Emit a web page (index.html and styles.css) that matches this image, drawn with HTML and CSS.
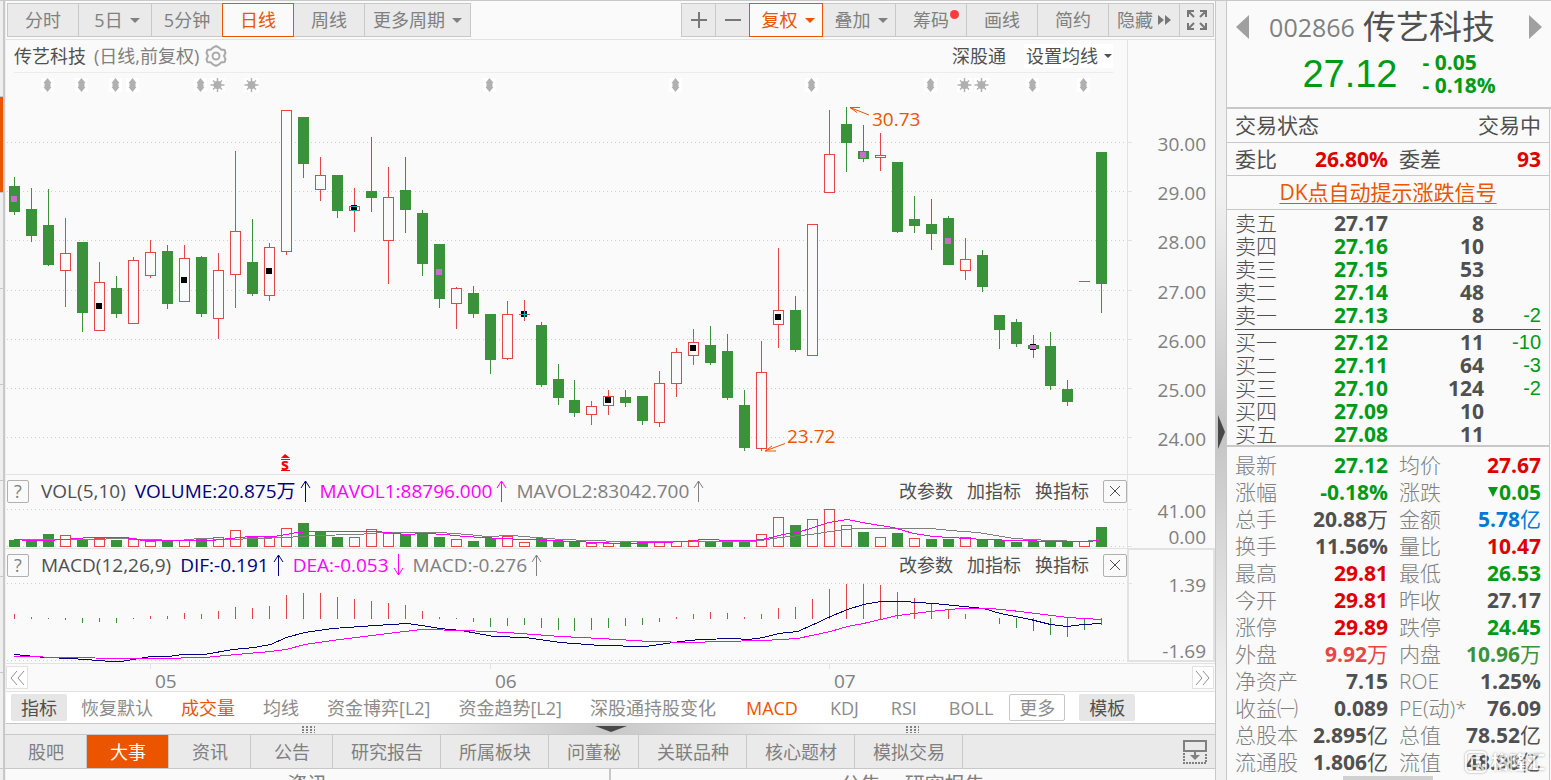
FILE: index.html
```html
<!DOCTYPE html>
<html lang="zh-CN">
<head>
    <meta charset="UTF-8">
    <title>传艺科技 002866</title>
    <meta name="viewport" content="width=device-width, initial-scale=1.0">
    <link rel="stylesheet" href="styles.css">
</head>
<body>
    <div class="rail">
        <span></span><span class="active"></span><span></span><span></span><span></span><span></span><span></span><span></span>
    </div>

    <main class="main-area">
        <div class="toolbar">
            <div class="btn-group">
                <button class="w-m">分时</button>
                <button class="w-c">5日<i class="caret"></i></button>
                <button class="w-m">5分钟</button>
                <button class="w-m active">日线</button>
                <button class="w-m">周线</button>
                <button class="w-l">更多周期<i class="caret"></i></button>
            </div>
            <div class="btn-group">
                <button class="w-s" aria-label="放大"><svg width="18" height="18"><path d="M9 1v16M1 9h16" stroke="#777" stroke-width="2"/></svg></button>
                <button class="w-s" aria-label="缩小"><svg width="18" height="18"><path d="M1 9h16" stroke="#777" stroke-width="2"/></svg></button>
                <button class="w-c active">复权<i class="caret"></i></button>
                <button class="w-c">叠加<i class="caret"></i></button>
                <button class="w-m"><span class="dotted">筹码</span></button>
                <button class="w-m">画线</button>
                <button class="w-m">简约</button>
                <button class="w-m">隐藏<svg class="ff" width="14" height="10"><path d="M1 0l6 5-6 5zM8 0l6 5-6 5z" fill="#777"/></svg></button>
                <button class="w-s" aria-label="全屏">
                    <svg width="22" height="22" fill="none" stroke="#777" stroke-width="2">
                        <path d="M2 8V2h6M2 2l6 6M14 2h6v6M20 2l-6 6M2 14v6h6M2 20l6-6M14 20h6v-6M20 20l-6-6"/>
                    </svg>
                </button>
            </div>
        </div>

        <section class="panel">
            <svg class="plot" id="kline" height="434"></svg>
            <div class="title-row">
                <div class="title-inner">
                    <b>传艺科技</b>
                    <span class="muted">(日线,前复权)</span>
                    <svg width="24" height="24" fill="none" stroke="#aaa" stroke-width="2">
                        <path d="M12 2l3 1.500 2 2 3.500.5 1 3-1.500 3 1.500 3-1 3-3.500.5-2 2-3 1.500-3-1.500-2-2-3.500-.5-1-3 1.500-3-1.500-3 1-3 3.500-.5 2-2z"/>
                        <circle cx="12" cy="12" r="3.500"/>
                    </svg>
                    <a class="push" href="#">深股通</a>
                    <button class="ma-btn">设置均线<i class="caret small"></i></button>
                </div>
            </div>
        </section>

        <section class="panel line">
            <svg class="plot" id="vol" height="73"></svg>
            <div class="legend">
                <button class="box">?</button>
                <span>VOL(5,10)</span>
                <span class="navy">VOLUME:20.875万<svg class="arr" width="11" height="22"><path d="M5.500 22V1M1 8l4.500-7L10 8"/></svg></span>
                <span class="pink">MAVOL1:88796.000<svg class="arr" width="11" height="22"><path d="M5.500 22V1M1 8l4.500-7L10 8"/></svg></span>
                <span class="muted">MAVOL2:83042.700<svg class="arr" width="11" height="22"><path d="M5.500 22V1M1 8l4.500-7L10 8"/></svg></span>
                <div class="actions">
                    <a href="#">改参数</a><a href="#">加指标</a><a href="#">换指标</a>
                    <button class="box close" aria-label="关闭"><svg width="12" height="12"><path d="M1 1l10 10M11 1L1 11" stroke="#505050"/></svg></button>
                </div>
            </div>
        </section>

        <section class="panel line">
            <svg class="plot" id="macd" height="114"></svg>
            <div class="legend">
                <button class="box">?</button>
                <span>MACD(12,26,9)</span>
                <span class="navy">DIF:-0.191<svg class="arr" width="11" height="22"><path d="M5.500 22V1M1 8l4.500-7L10 8"/></svg></span>
                <span class="pink">DEA:-0.053<svg class="arr" width="11" height="22"><path d="M5.500 0v21M1 14l4.500 7 4.500-7"/></svg></span>
                <span class="muted">MACD:-0.276<svg class="arr" width="11" height="22"><path d="M5.500 22V1M1 8l4.500-7L10 8"/></svg></span>
                <div class="actions">
                    <a href="#">改参数</a><a href="#">加指标</a><a href="#">换指标</a>
                    <button class="box close" aria-label="关闭"><svg width="12" height="12"><path d="M1 1l10 10M11 1L1 11" stroke="#505050"/></svg></button>
                </div>
            </div>
        </section>

        <section class="panel line">
            <svg class="plot" id="dates" height="27"></svg>
            <div class="pager">
                <button aria-label="向前"><svg width="16" height="16"><path d="M8 1L2 8l6 7M15 1L9 8l6 7"/></svg></button>
                <button aria-label="向后"><svg width="16" height="16"><path d="M1 1l6 7-6 7M8 1l6 7-6 7"/></svg></button>
            </div>
        </section>

        <div class="indicators">
            <button class="fill">指标</button>
            <a href="#">恢复默认</a>
            <a href="#" class="on">成交量</a>
            <a href="#">均线</a>
            <a href="#">资金博弈[L2]</a>
            <a href="#">资金趋势[L2]</a>
            <a href="#">深股通持股变化</a>
            <a href="#" class="en on">MACD</a>
            <a href="#" class="en">KDJ</a>
            <a href="#" class="en">RSI</a>
            <a href="#" class="en">BOLL</a>
            <button class="outline">更多</button>
            <button class="fill">模板</button>
        </div>

        <div class="hsplit">
            <i class="grip left"></i>
            <svg class="fold" width="32" height="6"><path d="M0 0h32L16 6z" fill="#484848"/></svg>
            <i class="grip right"></i>
        </div>

        <nav class="tabs">
            <a href="#">股吧</a>
            <a href="#" class="active">大事</a>
            <a href="#">资讯</a>
            <a href="#">公告</a>
            <a href="#">研究报告</a>
            <a href="#">所属板块</a>
            <a href="#">问董秘</a>
            <a href="#">关联品种</a>
            <a href="#">核心题材</a>
            <a href="#">模拟交易</a>
            <button class="dock" aria-label="停靠">
                <svg width="26" height="26" fill="none" stroke="#808080" stroke-width="2">
                    <path d="M2 2h22v10H2z"/>
                    <path d="M2 14v10h22V14" stroke-dasharray="2 1"/>
                    <path d="M13 12v6"/>
                    <path d="M8 16h10l-5 5z" fill="#808080" stroke="none"/>
                </svg>
            </button>
        </nav>

        <div class="news">
            <div>资讯</div>
            <div><span>公告</span><span>研究报告</span></div>
        </div>
    </main>

    <div class="vsplit"><svg width="7" height="34"><path d="M0 0l7 17-7 17z" fill="#484848"/></svg></div>

    <aside class="quote">
        <header class="quote-head">
            <div class="name-row">
                <button aria-label="上一个"><svg width="13" height="24"><path d="M13 0v24L0 12z" fill="#a0a0a0"/></svg></button>
                <h1><small>002866</small>传艺科技</h1>
                <button aria-label="下一个"><svg width="13" height="24"><path d="M0 0v24l13-12z" fill="#a0a0a0"/></svg></button>
            </div>
            <div class="price-row">
                <span class="price">27.12</span>
                <span class="change">- 0.05<br>- 0.18%</span>
            </div>
        </header>

        <div class="q-body">
            <div class="q-row"><span>交易状态</span><span>交易中</span></div>
            <div class="q-row four"><span>委比</span><b class="red">26.80%</b><span>委差</span><b class="red">93</b></div>
            <div class="q-row mid"><a href="#">DK点自动提示涨跌信号</a></div>

            <table class="book">
                <tbody>
                    <tr><th>卖五</th><td>27.17</td><td>8</td><td></td></tr>
                    <tr><th>卖四</th><td class="green">27.16</td><td>10</td><td></td></tr>
                    <tr><th>卖三</th><td class="green">27.15</td><td>53</td><td></td></tr>
                    <tr><th>卖二</th><td class="green">27.14</td><td>48</td><td></td></tr>
                    <tr><th>卖一</th><td class="green">27.13</td><td>8</td><td>-2</td></tr>
                </tbody>
            </table>
            <table class="book bids">
                <tbody>
                    <tr><th>买一</th><td class="green">27.12</td><td>11</td><td>-10</td></tr>
                    <tr><th>买二</th><td class="green">27.11</td><td>64</td><td>-3</td></tr>
                    <tr><th>买三</th><td class="green">27.10</td><td>124</td><td>-2</td></tr>
                    <tr><th>买四</th><td class="green">27.09</td><td>10</td><td></td></tr>
                    <tr><th>买五</th><td class="green">27.08</td><td>11</td><td></td></tr>
                </tbody>
            </table>

            <table class="stats">
                <tbody>
                    <tr><th>最新</th><td class="green">27.12</td><th>均价</th><td class="red">27.67</td></tr>
                    <tr><th>涨幅</th><td class="green">-0.18%</td><th>涨跌</th><td class="green"><i class="down"></i>0.05</td></tr>
                    <tr><th>总手</th><td>20.88<em>万</em></td><th>金额</th><td class="blue">5.78<em>亿</em></td></tr>
                    <tr><th>换手</th><td>11.56%</td><th>量比</th><td class="red">10.47</td></tr>
                    <tr><th>最高</th><td class="red">29.81</td><th>最低</th><td class="green">26.53</td></tr>
                    <tr><th>今开</th><td class="red">29.81</td><th>昨收</th><td>27.17</td></tr>
                    <tr><th>涨停</th><td class="red">29.89</td><th>跌停</th><td class="green">24.45</td></tr>
                    <tr><th>外盘</th><td class="red2">9.92<em>万</em></td><th>内盘</th><td class="green2">10.96<em>万</em></td></tr>
                    <tr><th>净资产</th><td>7.15</td><th>ROE</th><td>1.25%</td></tr>
                    <tr><th>收益㈠</th><td>0.089</td><th>PE(动)*</th><td>76.09</td></tr>
                    <tr><th>总股本</th><td>2.895<em>亿</em></td><th>总值</th><td>78.52<em>亿</em></td></tr>
                    <tr><th>流通股</th><td>1.806<em>亿</em></td><th>流值</th><td>48.98<em>亿</em></td></tr>
                </tbody>
            </table>
            <div class="watermark">
                <svg width="22" height="22"><rect x="1" y="1" width="20" height="20" rx="4" fill="none" stroke="#fff" stroke-width="2"/><path d="M15 7H7v8h8v-4h-4M16 16l3 3" fill="none" stroke="#fff" stroke-width="2"/></svg>
                格隆汇
            </div>
            <div class="hscroll"></div>
        </div>
    </aside>

    <script src="chart.js"></script>
</body>
</html>
```

FILE: styles.css
```css
:root {
    --bg: #fafafa;
    --btn: #eaeaea;
    --line: #c8c8c8;
    --soft: #e2e2e2;
    --text: #505050;
    --muted: #808080;
    --orange: #eb5500;
    --green: #009a17;
    --red: #dd0000;
}
* {
    box-sizing: border-box;
}
body {
    margin: 0;
    height: 100vh;
    display: flex;
    overflow: hidden;
    background: var(--bg);
    color: var(--text);
    font-family: "Open Sans", "Noto Sans CJK SC", sans-serif;
    font-size: 18px;
    line-height: 24px;
    border-top: 1px solid var(--line);
}
button {
    font: inherit;
    color: inherit;
    background: none;
    border: none;
    padding: 0;
    display: flex;
    align-items: center;
    justify-content: center;
    white-space: nowrap;
}
a {
    color: inherit;
    text-decoration: none;
    white-space: nowrap;
}
svg {
    display: block;
    flex: none;
}
.muted {
    color: var(--muted);
}
.navy {
    color: #000080;
}
.pink {
    color: #ff00ff;
}

/* left rail */
.rail {
    width: 6px;
    flex: none;
    border-right: 1px solid #eee;
    box-shadow: inset -2px 0 0 var(--line);
    background: #efefef;
}
.rail span {
    display: block;
    width: 3px;
    height: 96px;
    border-bottom: 1px solid var(--line);
}
.rail .active {
    background: var(--orange);
}

.main-area {
    flex: 1;
    min-width: 0;
}

/* toolbar */
.toolbar {
    display: flex;
    justify-content: space-between;
    padding: 2px 1px;
    height: 39px;
    border-bottom: 1px solid var(--soft);
}
.btn-group {
    display: flex;
    height: 34px;
}
.btn-group button {
    background: var(--btn);
    border: 1px solid var(--line);
    color: var(--muted);
    margin-right: -1px;
}
.btn-group button:last-child {
    margin-right: 0;
}
.btn-group .active {
    background: var(--bg);
    border-color: var(--orange);
    color: var(--orange);
    z-index: 1;
}
.w-s {
    width: 35px;
}
.w-m {
    width: 72px;
}
.btn-group .w-c {
    width: 74px;
    padding-left: 4px;
}
.w-l {
    width: 107px;
}
.caret {
    margin-left: 7px;
    border: 5px solid transparent;
    border-top-color: currentColor;
    border-bottom: none;
}
.caret.small {
    margin-left: 6px;
    border-width: 4px;
    border-bottom: none;
}
.ff {
    margin-left: 4px;
}
.dotted {
    position: relative;
}
.dotted::after {
    content: "";
    position: absolute;
    top: 2px;
    right: -10px;
    width: 9px;
    height: 9px;
    border-radius: 50%;
    background: #ff3b3b;
}

/* chart panels: svg and heading share one grid cell */
.panel {
    display: grid;
}
.panel > * {
    grid-area: 1 / 1;
}
.panel.line {
    border-top: 1px solid var(--soft);
}
.plot {
    width: 100%;
    min-width: 0;
    overflow: visible;
    font-size: 19px;
}
.title-row {
    padding: 0 102px 0 8px;
}
.title-inner {
    display: flex;
    align-items: center;
    height: 33px;
    border-bottom: 1px solid #ececec;
}
.title-inner b {
    font-weight: 400;
}
.title-inner .muted {
    margin: 0 5px 0 8px;
}
.push {
    margin-left: auto;
}
.ma-btn {
    margin-left: 18px;
    padding: 0 1px 0 2px;
    background: #fff;
}
.legend {
    display: flex;
    align-items: center;
    gap: 9px;
    height: 32px;
    padding: 0 88px 0 1px;
    font-size: 19px;
    white-space: nowrap;
}
.legend > span {
    display: flex;
    align-items: center;
}
.box + span {
    margin-left: 3px;
}
.box {
    width: 22px;
    height: 23px;
    border: 1px solid #b0b0b0;
    border-radius: 2px;
    color: var(--muted);
    font-size: 18px;
}
.close {
    width: 24px;
}
.arr {
    margin-left: 4px;
    fill: none;
    stroke: currentColor;
}
.actions {
    display: flex;
    align-items: center;
    gap: 14px;
    margin-left: auto;
    font-size: 18px;
}
.pager {
    display: flex;
    justify-content: space-between;
    padding: 2px 1px 0 0;
    height: 26px;
}
.pager button {
    width: 22px;
    height: 23px;
    background: #fff;
    border: 1px solid var(--soft);
}
.pager path {
    fill: none;
    stroke: #909090;
}

.indicators {
    display: flex;
    align-items: center;
    height: 32px;
    padding-left: 5px;
    background: #fff;
    border-top: 1px solid var(--soft);
    color: #8c8c8c;
}
.indicators a {
    padding: 0 14px;
}
.indicators .en {
    padding: 0 16px;
}
.indicators button {
    width: 56px;
    height: 27px;
    border-radius: 2px;
}
.indicators .on {
    color: var(--orange);
}
.indicators .fill {
    background: #e6e6e6;
    color: var(--text);
}
.indicators .outline {
    border: 1px solid var(--line);
    margin-right: 14px;
}

.hsplit {
    display: grid;
    grid-template-columns: repeat(4, 1fr);
    height: 11px;
    border-top: 1px solid var(--line);
    background: linear-gradient(90deg, #f0f0f0 32%, #c8c8c8 50%, #f0f0f0 68%);
    align-items: center;
    justify-items: center;
}
.hsplit > * {
    grid-row: 1;
}
.grip {
    width: 13px;
    height: 7px;
    background: radial-gradient(circle at 1px 1px, #808080 1px, transparent 1px) 0 0 / 4px 3px;
}
.grip.left {
    grid-column: 1 / 3;
}
.fold {
    grid-column: 2 / 4;
}
.grip.right {
    grid-column: 3 / 5;
}

.tabs {
    display: flex;
    height: 35px;
    margin-left: -1px;
    background: var(--btn);
    border-top: 1px solid var(--line);
    border-bottom: 1px solid var(--line);
    color: var(--muted);
}
.tabs a {
    min-width: 82px;
    padding: 0 17px 0 18px;
    line-height: 34px;
    text-align: center;
    border-right: 1px solid var(--line);
}
.tabs .active {
    background: var(--orange);
    color: #fff;
}
.dock {
    margin-left: auto;
    padding-right: 7px;
}
.news {
    display: grid;
    grid-template-columns: 1fr 1fr;
    font-size: 20px;
    line-height: 32px;
    text-align: center;
    color: var(--muted);
}
.news div:first-child {
    border-right: 2px solid var(--line);
}
.news span {
    margin: 0 12px;
}

.vsplit {
    width: 12px;
    flex: none;
    display: flex;
    align-items: center;
    padding: 82px 0 0 2px;
    border-left: 1px solid var(--line);
    border-right: 1px solid var(--line);
    background: linear-gradient(#f0f0f0 25%, #c4c4c4 55%, #f0f0f0 88%);
}

/* quote side */
.quote {
    width: 324px;
    flex: none;
    font-size: 21px;
    white-space: nowrap;
}
.quote-head {
    height: 108px;
    padding: 5px 9px 0;
    border-bottom: 2px solid var(--line);
}
.name-row {
    display: flex;
    justify-content: space-between;
    align-items: center;
    height: 42px;
}
.name-row h1 {
    margin: 0;
    padding-right: 14px;
    font-size: 33px;
    line-height: 42px;
    font-weight: 400;
    display: flex;
    align-items: center;
    gap: 8px;
}
.name-row small {
    font-size: 25px;
    color: var(--muted);
}
.price-row {
    display: flex;
    align-items: center;
    justify-content: center;
    gap: 25px;
    padding-left: 20px;
    height: 52px;
    color: var(--green);
}
.price {
    font-family: "Liberation Sans", sans-serif;
    font-size: 38px;
}
.change {
    font-weight: 700;
    line-height: 23px;
}
.q-body {
    position: relative;
    margin-right: 1px;
    border-right: 1px solid var(--line);
}
.q-row {
    display: flex;
    justify-content: space-between;
    padding: 0 8px;
    line-height: 33px;
    height: 34px;
    border-bottom: 1px solid var(--line);
}
.q-row.four {
    height: 33px;
    line-height: 32px;
    display: grid;
    grid-template-columns: 50px 103px 96px 1fr;
}
.q-row.four b {
    text-align: right;
}
.q-row.four b + span {
    padding-left: 11px;
}
.q-row.mid {
    justify-content: center;
}
.q-row a {
    color: var(--orange);
    text-decoration: underline;
    text-decoration-thickness: 1px;
    text-underline-offset: 3px;
}
.red {
    color: var(--red);
}
.green {
    color: var(--green);
}
.blue {
    color: #0078d7;
}
.red2 {
    color: #e84545;
}
.green2 {
    color: #3a923a;
}
table {
    width: calc(100% - 16px);
    margin: 0 8px;
    border-collapse: collapse;
    table-layout: fixed;
}
th, td {
    padding: 0;
}
th {
    text-align: left;
    font-weight: 300;
}
td {
    text-align: right;
    font-weight: 700;
}
.book {
    padding-top: 2px;
    border-collapse: separate;
    border-spacing: 0;
}
.book tr {
    height: 23px;
    line-height: 23px;
}
.book th {
    width: 50px;
}
.book td:nth-child(2) {
    width: 103px;
}
.book td:nth-child(3) {
    width: 96px;
}
.book td:last-child {
    font-family: "Liberation Sans", sans-serif;
    font-size: 20px;
    font-weight: 400;
    color: var(--green);
}
.bids {
    border-top: 1px solid var(--text);
    margin-top: 2px;
    padding-top: 1px;
}
.stats {
    position: relative;
    margin-top: 6px;
}
.stats::before {
    content: "";
    position: absolute;
    left: -8px;
    right: -8px;
    top: -7px;
    border-top: 2px solid var(--line);
}
.stats tr {
    height: 27px;
    line-height: 27px;
}
.stats th {
    color: var(--muted);
    width: 68px;
}
.stats th:nth-child(3) {
    width: 80px;
    padding-left: 11px;
}
.stats td:nth-child(2) {
    width: 85px;
}
em {
    font-style: normal;
    font-weight: 400;
}
.down {
    display: inline-block;
    border: 5px solid transparent;
    border-top: 10px solid currentColor;
    border-bottom: none;
    margin: 0 1px 3px 0;
}
.watermark {
    position: absolute;
    right: 4px;
    top: 641px;
    display: flex;
    align-items: center;
    gap: 4px;
    font-size: 18px;
    font-weight: 700;
    color: #fff;
    opacity: 0.7;
    text-shadow: 0 0 3px #777;
}
.watermark svg {
    filter: drop-shadow(0 0 1px #777);
}
.hscroll {
    width: 90px;
    height: 4px;
    margin-left: 116px;
    background: #d0d0d0;
}
```

FILE: chart.js
```js
const RED = '#e64545', GREEN = '#3a923a', GRID = '#cfcfcf', SOFT = '#e2e2e2', MUTED = '#808080';
const LEFT = 6, AXIS = 88;

// high, body top, body bottom, low, colour, marker, marker y
const candles = [
    [177,186,212,215,'g','p',196],[188,209,236,242,'g'],[189,225,265,266,'g'],[218,253,271,307,'r'],
    [242,242,313,332,'g'],[262,282,331,331,'r','k',303],[276,288,314,318,'g'],[257,260,324,324,'r'],
    [240,252,276,278,'r'],[245,251,304,309,'g'],[245,258,302,302,'r','k',277],[256,257,314,317,'g'],
    [253,270,319,339,'r'],[151,231,275,308,'r'],[219,262,294,296,'g'],[243,247,296,301,'r','k',268],
    [110,110,252,255,'r'],[117,117,164,178,'g'],[157,175,190,201,'r'],[175,175,211,218,'g'],
    [188,206,211,232,'r','c',205],[137,191,198,212,'g'],[167,197,241,284,'r'],[157,190,210,233,'g'],
    [210,213,264,276,'g'],[244,244,299,308,'g','p',269],[287,288,304,329,'r'],[286,293,314,318,'g'],
    [314,314,360,374,'g'],[301,314,359,360,'r'],[300,314,315,321,'r','x',311],[322,325,385,387,'g'],
    [364,379,398,405,'g'],[380,400,413,417,'g'],[401,406,415,425,'r'],[390,396,406,415,'r','k',397],
    [390,397,403,407,'g'],[396,396,421,425,'g'],[371,383,423,427,'r'],[348,352,384,397,'r'],
    [329,342,356,365,'r','k',345],[326,345,363,365,'g'],[334,351,398,400,'g'],[390,405,448,451,'g'],
    [341,372,449,451,'r'],[248,310,325,348,'r','k',314],[296,310,350,352,'g'],[224,224,356,356,'r'],
    [110,154,193,193,'r'],[107,124,143,172,'g'],[125,151,159,162,'g','p',152],[133,155,158,171,'r'],
    [162,162,232,233,'g'],[196,219,226,233,'g'],[199,224,234,250,'g'],[216,218,265,265,'g','p',238],
    [238,259,271,280,'r'],[250,255,287,292,'g'],[315,315,330,349,'g'],[319,322,344,347,'g'],
    [335,345,349,358,'g','b',344],[332,346,386,390,'g'],[380,389,402,406,'g'],[281,281,282,282,'r'],
    [152,152,284,313,'g']
];

const volTops = [540,541,534,535,539,538,540,539,541,541,540,539,537,530,536,537,528,523,532,537,537,529,
    533,534,533,537,539,541,538,536,542,538,541,541,543,543,542,542,542,541,540,542,542,541,534,517,525,
    519,509,525,532,537,533,538,539,539,537,540,540,542,541,541,541,541,527];
const volColors = 'gggrgrgrrgrgrrgrrgggrrrgggrggrrgggrrggrrrgggrrgrrrgrgrggrggggggrg';

const macdEnds = [614,617,619,620,623,622,623,619,616,616,613,614,611,607,608,606,595,593,593,597,599,601,
    603,605,611,617,619,622,627,626,625,628,630,631,630,628,626,625,622,617,614,612,613,617,614,608,607,
    599,589,584,584,585,592,598,603,610,614,618,624,628,631,635,637,630,625];
const macdColors = 'rrggggggrrrrrrrrrrrrrrrrrrgggggggggggggrrrrrrrrrrrrrrrrrrgggggggg';

const mavol1 = '14,539 29,540 46,540 64,539 89,537 125,537 143,540 179,540 211,540 229,538 250,536 273,536 286,534 296,532 311,531 377,531 405,534 425,533 445,534 464,536 500,538 550,540 574,541 620,543 690,541 700,539 737,540 753,540 767,538 782,534 797,532 813,527 828,522 847,519 867,523 893,527 913,533 933,536 967,538 983,539 1020,540 1053,541 1090,541 1101,539';
const mavol2 = '14,539 82,539 129,538 143,539 179,540 198,538 229,539 257,538 286,537 314,535 357,534 382,532 439,532 468,534 486,536 511,535 536,537 560,539 620,541 700,541 753,541 780,537 810,534 837,530 857,528 930,528 950,530 977,532 1013,538 1050,540 1083,541 1101,539';
const dif = '14,654 45,657 71,658 111,661 121,661 150,656 168,656 182,654 204,654 232,649 254,647 270,644 286,637 304,632 332,628 375,625 407,623 421,625 439,628 461,630 493,636 525,637 560,642 600,645 645,646 680,641 700,639 733,638 748,639 763,637 778,633 797,631 813,624 830,616 847,609 863,604 880,601 903,601 933,603 983,608 1000,613 1030,619 1050,624 1067,626 1083,624 1101,623';
const dea = '14,656 71,657 118,658 157,658 204,657 236,654 270,651 286,649 304,644 332,640 371,635 404,631 421,629 464,630 507,632 560,636 600,638 650,641 690,642 720,641 763,640 797,638 830,631 847,626 863,623 897,615 930,611 960,608 990,608 1020,611 1067,617 1101,619';

const events = { 2:'u', 4:'u', 6:'u', 7:'u', 11:'u', 12:'s', 14:'s', 28:'u', 39:'u', 47:'u', 54:'u', 56:'s', 57:'s', 60:'u', 63:'u' };

let width, right, plotRight, scale;

const cx = i => 14 + Math.round(i * 1087 / 64 * scale);
const rect = (x, y, w, h, fill) => `<rect x="${x}" y="${y}" width="${w}" height="${h}" fill="${fill}"/>`;
const frame = (x, y, w, h, fill) => h < 2 ? rect(x, y, w, 1, RED)
    : `<rect x="${x + 0.5}" y="${y + 0.5}" width="${w - 1}" height="${h - 1}" fill="${fill}" stroke="${RED}"/>`;
const label = (y, text) => `<text x="${right - 9}" y="${y}" text-anchor="end" fill="${MUTED}">${text}</text>`;
const grid = y => `<path d="M7 ${y + 0.5}H${plotRight - 3}" stroke="${GRID}" stroke-dasharray="1 3"/>` + rect(plotRight + 1, y, 4, 1, SOFT);

function curve(points, color) {
    const pts = points.split(' ').map(p => {
        const [x, y] = p.split(',');
        return (14.5 + (x - 14) * scale) + ',' + (+y + 0.5);
    });
    return `<polyline points="${pts.join(' ')}" fill="none" stroke="${color}" shape-rendering="crispEdges"/>`;
}

function put(id, top, html) {
    const el = document.getElementById(id);
    el.setAttribute('viewBox', `${LEFT} ${top} ${width} ${el.getAttribute('height')}`);
    el.innerHTML = html;
}

function marker(x, y, kind) {
    if (kind === 'p') return rect(x - 3, y, 6, 6, '#c86ec8');
    let s = rect(x - 3, y, 6, 6, '#000');
    if (kind === 'c') s += rect(x - 3, y + 1, 6, 1, '#00b4b4') + rect(x - 3, y + 5, 6, 1, '#00b4b4');
    if (kind === 'x') s += rect(x - 3, y + 3, 6, 1, '#00b4b4') + rect(x, y, 1, 6, '#00b4b4');
    if (kind === 'b') s += rect(x - 3, y + 1, 6, 4, '#c86ec8');
    return s;
}

function eventIcon(x, kind) {
    if (kind === 'u') {
        return rect(x - 7, 78, 13, 14, '#fff') +
            `<path d="M${x - 0.5} 78l4 5h-1v4h1l-4 5-4-5h1v-4h-1z" fill="#b0b0b0"/>`;
    }
    return rect(x - 8, 78, 15, 14, '#fff') +
        `<circle cx="${x - 0.5}" cy="85" r="4" fill="#b0b0b0"/>` +
        `<path d="M${x - 0.5} 78v14M${x - 7.5} 85h14M${x - 5} 80.500l9 9M${x + 4} 80.500l-9 9" stroke="#b0b0b0" stroke-width="1.500"/>`;
}

function drawKline() {
    let s = rect(plotRight, 40, 1, 434, SOFT);
    [142, 191, 240, 290, 339, 388, 437].forEach((y, i) => {
        s += grid(y) + label(y + 9, (30 - i).toFixed(2));
    });
    for (const i in events) s += eventIcon(cx(+i), events[i]);
    candles.forEach(([hi, top, bot, low, c, mark, my], i) => {
        const x = cx(i);
        s += rect(x, hi, 1, low - hi, c === 'r' ? RED : GREEN);
        s += c === 'r' ? frame(x - 5, top, 11, bot - top, '#fafafa') : rect(x - 5, top, 11, bot - top, GREEN);
        if (mark) s += marker(x, my, mark);
    });
    // high / low notes
    const h = cx(49), l = cx(44);
    s += `<path d="M${h + 23} 115l-19-7.500h10M${h + 4} 107.500l7 5" fill="none" stroke="#eb5500"/>`;
    s += `<text x="${h + 26}" y="126" fill="#eb5500">30.73</text>`;
    s += `<path d="M${l + 24} 443.500l-20 7.500h11M${l + 4} 451l7-5" fill="none" stroke="#eb5500"/>`;
    s += `<text x="${l + 26}" y="443" fill="#eb5500">23.72</text>`;
    // event flag
    const f = cx(16) - 1;
    s += `<path d="M${f - 4} 458l4-4 5 4z" fill="#f00"/><text x="${f}" y="470" text-anchor="middle" font-size="16" font-weight="700" fill="#f00">s</text>`;
    s += rect(f - 4, 459, 9, 1, '#f00') + rect(f - 4, 470, 9, 1, '#f00');
    put('kline', 40, s);
}

function drawVol() {
    let s = rect(plotRight, 475, 1, 73, SOFT) + grid(509) + grid(546) + label(518, '41.00') + label(544, '0.00');
    volTops.forEach((y, i) => {
        const x = cx(i) - 5;
        s += volColors[i] === 'r' ? frame(x, y, 11, 547 - y, '#fafafa') : rect(x, y, 11, 547 - y, GREEN);
    });
    s += curve(mavol2, MUTED) + curve(mavol1, '#ff00ff');
    put('vol', 475, s);
}

function drawMacd() {
    let s = `<rect x="${plotRight + 1}" y="549" width="${right - plotRight - 2}" height="112" fill="none" stroke="${SOFT}" stroke-width="2"/>`;
    s += grid(583) + grid(660) + label(592, '1.39') + label(658, '-1.69');
    macdEnds.forEach((y, i) => {
        s += macdColors[i] === 'r' ? rect(cx(i), y, 1, 619 - y, RED) : rect(cx(i), 618, 1, y - 618, GREEN);
    });
    s += curve(dif, '#000080') + curve(dea, '#ff00ff');
    put('macd', 549, s);
}

function drawDates() {
    let s = '';
    [[8, '05'], [28, '06'], [48, '07']].forEach(([i, m]) => {
        s += rect(cx(i), 664, 1, 5, SOFT) + `<text x="${cx(i) + 5}" y="688" fill="${MUTED}">${m}</text>`;
    });
    put('dates', 664, s);
}

function draw() {
    width = document.querySelector('.main-area').clientWidth;
    right = LEFT + width;
    plotRight = right - AXIS;
    scale = (plotRight - 14) / 1113;
    drawKline();
    drawVol();
    drawMacd();
    drawDates();
}

window.addEventListener('resize', draw);
draw();
```
